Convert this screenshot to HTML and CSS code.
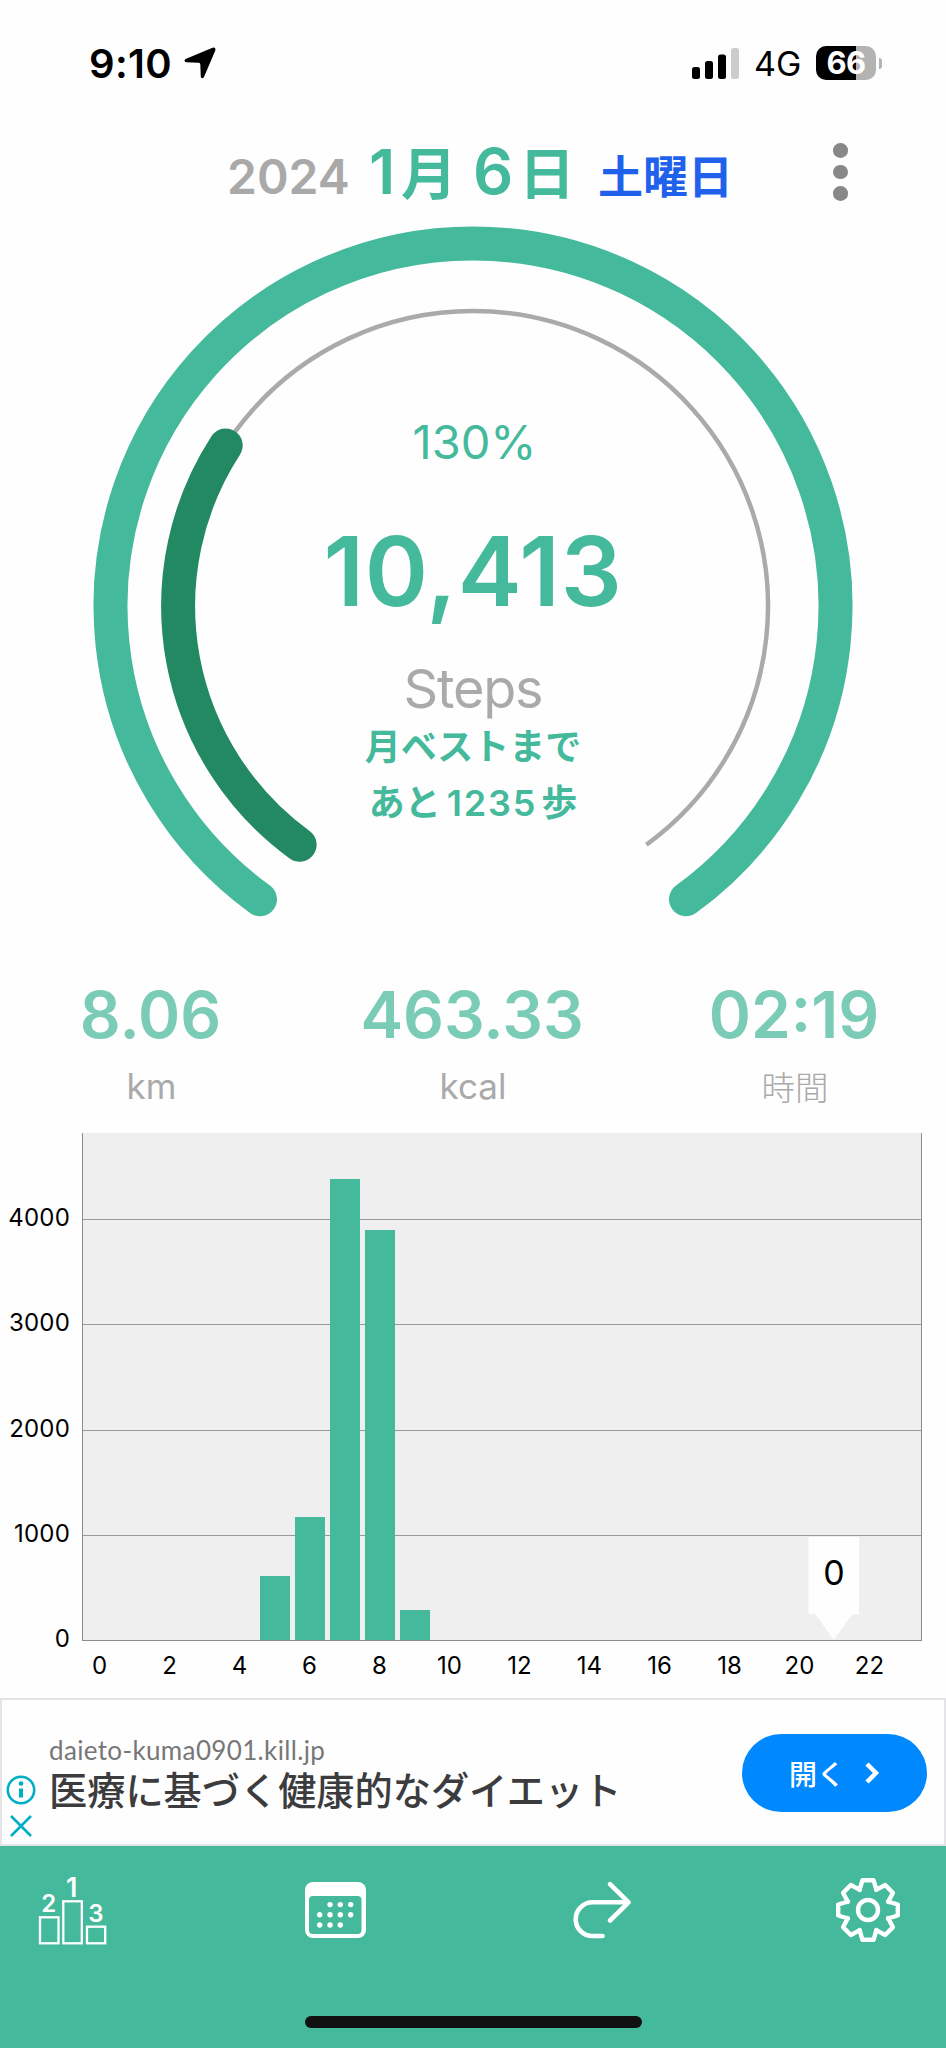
FILE: index.html
```
<!DOCTYPE html>
<html lang="ja">
<head>
  <meta charset="utf-8">
  <title>歩数計</title>
  <link rel="stylesheet" href="styles.css">
</head>
<body>
  <div class="statusBar">
    <span class="time">9:10</span>
    <svg class="location" width="32" height="32" viewBox="0 0 32 32"><path d="M28.5 0.8Q32 -0.5 31.3 3.5L20 30Q18.3 32.5 16.8 30L16.3 17.2Q16.2 15.8 14.8 15.7L2 15.2Q-0.8 14.2 1.5 12Z"/></svg>
    <svg class="signal" width="47" height="31" viewBox="0 0 47 31">
      <rect x="0" y="19" width="8" height="12" rx="2.5"/>
      <rect x="13" y="13" width="8" height="18" rx="2.5"/>
      <rect x="26" y="6.5" width="8" height="24.5" rx="2.5"/>
      <rect class="off" x="39" y="0" width="8" height="31" rx="2.5"/>
    </svg>
    <span class="network">4G</span>
    <div class="battery">66</div>
    <div class="batteryTip"></div>
  </div>

  <header class="dateBar">
    <div class="date">
      <span class="year">2024</span>
      <span class="month">1</span><span class="kanji">月</span>
      <span class="day">6</span><span class="kanji">日</span>
      <span class="weekday">土曜日</span>
    </div>
    <div class="menu"><i></i><i></i><i></i></div>
  </header>

  <section class="gauge">
    <svg class="rings" width="946" height="700" viewBox="0 220 946 700">
      <path class="total" d="M260 899.3A362.5 362.5 0 1 1 686 899.3"/>
      <path class="track" d="M299.6 844.7A295 295 0 1 1 646.4 844.7"/>
      <path class="best" d="M299.6 844.7A295 295 0 0 1 225.7 445.5"/>
    </svg>
    <div class="summary">
      <div class="percent">130%</div>
      <div class="steps">10,413</div>
      <div class="unit">Steps</div>
      <div class="toBest">月ベストまで</div>
      <div class="toBest">あと<span class="left">1235</span>歩</div>
    </div>
  </section>

  <section class="metrics">
    <div class="metric"><b>8.06</b><span>km</span></div>
    <div class="metric"><b>463.33</b><span>kcal</span></div>
    <div class="metric"><b>02:19</b><span class="jp">時間</span></div>
  </section>

  <section class="chart">
    <div class="yAxis"><span>4000</span><span>3000</span><span>2000</span><span>1000</span><span>0</span></div>
    <div class="plot" id="plot"></div>
    <div class="xAxis" id="xAxis"></div>
  </section>

  <section class="ad">
    <div class="adChoices">
      <svg width="30" height="30" viewBox="0 0 30 30"><circle cx="15" cy="15" r="13.2"/><path class="thick" d="M15 13.5V22.5"/><circle class="dot" cx="15" cy="8.5" r="2.3"/></svg>
      <svg width="30" height="26" viewBox="0 0 30 26"><path d="M5 3L25 23M25 3L5 23"/></svg>
    </div>
    <div class="adText">
      <div class="adUrl">daieto-kuma0901.kill.jp</div>
      <div class="adTitle">医療に基づく健康的なダイエット</div>
    </div>
    <div class="adButton">開く
      <svg width="18" height="22" viewBox="0 0 18 22"><path d="M4 2L13 11L4 20"/></svg>
    </div>
  </section>

  <nav class="tabs">
    <div class="icons">
      <svg class="ranking" width="70" height="72" viewBox="38 1875 70 72">
        <g class="line podium">
          <rect x="40" y="1918.3" width="18.5" height="26"/>
          <rect x="63.3" y="1902.3" width="18.5" height="42"/>
          <rect x="87" y="1927.7" width="18.2" height="16.6"/>
        </g>
        <text class="first" x="71.7" y="1898">1</text>
        <text x="48.8" y="1913">2</text>
        <text x="95.8" y="1923">3</text>
      </svg>
      <svg class="calendar" width="62" height="58" viewBox="305 1881 62 58">
        <rect x="305" y="1882" width="61" height="56" rx="8" fill="#fff"/>
        <rect x="309" y="1896" width="52.5" height="38" rx="4" fill="#44b99b"/>
        <g class="dots">
          <path d="M330 1904.6h0M340.3 1904.6h0M350.7 1904.6h0"/>
          <path d="M319.7 1914.8h0M330 1914.8h0M340.3 1914.8h0M350.7 1914.8h0"/>
          <path d="M319.7 1925h0M330 1925h0M340.3 1925h0"/>
        </g>
      </svg>
      <svg class="forward" width="60" height="60" viewBox="572 1882 60 60">
        <path class="line share" d="M602.5 1938H592.5A16.85 16.85 0 0 1 592.5 1904.3H628.5M610 1886.2L628.6 1904.3L610 1922.5"/>
      </svg>
      <svg width="68" height="68" viewBox="-34 -34 68 68">
        <path class="line gear" id="gear"/>
        <circle class="line gear" r="10"/>
      </svg>
    </div>
    <div class="homeBar"></div>
  </nav>
  <script>
    var hours=[0,0,0,0,0,611,1166,4380,3898,282,0,0,0,0,0,0,0,0,0,0,0,0,0,0];
    var bars='';
    var labels='';
    for(var i = 0; i<hours.length; i++)
    {
      bars+='<div class="slot">';
      if(hours[i]>0)
      {
        bars+='<div class="bar" style="height:'+(hours[i]*0.10525)+'px"></div>';
      }
      if(i===21)
      {
        bars+='<div class="tip">0</div>';
      }
      bars+='</div>';
      if(i%2===0)
      {
        labels+='<span>'+i+'</span>';
      }
    }
    document.getElementById("plot").innerHTML=bars;
    document.getElementById("xAxis").innerHTML=labels;

    //one tooth, turned eight times round the centre
    var tooth=[[-8.5,-20],[-5.5,-29.8],[5.5,-29.8],[8.5,-20]];
    var d='';
    for(var t = 0; t<8; t++)
    {
      var a=t*Math.PI/4;
      for(var p = 0; p<tooth.length; p++)
      {
        var x=tooth[p][0]*Math.cos(a)-tooth[p][1]*Math.sin(a);
        var y=tooth[p][0]*Math.sin(a)+tooth[p][1]*Math.cos(a);
        d+=(d===''?'M':'L')+x.toFixed(2)+' '+y.toFixed(2);
      }
    }
    document.getElementById("gear").setAttribute("d",d+'Z');
  </script>
</body>
</html>
```
FILE: styles.css
```
body {
  margin:0;
  width:946px;
  height:2048px;
  overflow:hidden;
  background-color:#fefefe;
  font-family:Inter, "Noto Sans CJK JP", sans-serif;
  color:#000;
}
.statusBar {
  display:flex;
  align-items:center;
  height:126px;
  padding-left:89px;
}
.time {
  width:95px;
  font-size:40px;
  font-weight:600;
  letter-spacing:0.3px;
}
.signal {
  margin-left:476px;
}
.signal .off {
  fill:#ccc;
}
.network {
  width:62px;
  margin-left:15px;
  font-size:34px;
}
.battery {
  width:60px;
  height:34px;
  border-radius:10px;
  background:linear-gradient(to right, #000 66%, #b3b3b3 66%);
  color:#fff;
  font-size:31px;
  font-weight:700;
  line-height:34px;
  letter-spacing:-0.6px;
  text-align:center;
}
.batteryTip {
  width:3px;
  height:11px;
  margin-left:3px;
  border-radius:0 4px 4px 0;
  background-color:#b3b3b3;
}
.dateBar {
  display:flex;
  align-items:center;
  height:94px;
}
.date {
  display:flex;
  align-items:baseline;
  width:605px;
  padding:2px 0 0 227px;
  line-height:60px;
  white-space:nowrap;
  color:#44b99b;
  font-weight:600;
}
.year {
  width:142px;
  font-size:48px;
  color:#a9a9a9;
}
.month {
  width:32px;
  font-size:62px;
}
.kanji {
  width:72px;
  font-size:56px;
}
.day {
  width:46px;
  font-size:63px;
}
.kanji + .weekday {
  margin-left:7px;
}
.weekday {
  font-size:45px;
  color:#1f61ea;
}
.menu {
  display:flex;
  flex-direction:column;
  gap:7.2px;
  padding:0 0 2px 1px;
}
.menu i {
  width:14.6px;
  height:14.6px;
  border-radius:50%;
  background-color:#888;
}
.gauge {
  display:grid;
  height:740px;
}
.rings, .summary {
  grid-area:1 / 1;
}
.rings path {
  fill:none;
  stroke-width:34;
  stroke-linecap:round;
}
.rings .total {
  stroke:#44b99b;
}
.rings .track {
  stroke:#aaa;
  stroke-width:4.5;
  stroke-linecap:butt;
}
.rings .best {
  stroke:#238962;
}
.summary {
  padding-top:192px;
  text-align:center;
  color:#44b99b;
}
.percent {
  height:96px;
  padding-left:3px;
  font-size:47px;
  line-height:60px;
}
.steps {
  height:132px;
  font-size:96px;
  font-weight:600;
  line-height:126px;
  letter-spacing:0.8px;
}
.unit {
  height:79px;
  font-size:54px;
  line-height:98px;
  letter-spacing:-1.2px;
  color:#aaa;
}
.toBest {
  height:56px;
  font-size:36px;
  font-weight:600;
  line-height:57px;
}
.left {
  margin:0 4px 0 6px;
  font-size:36px;
  letter-spacing:1.8px;
}
.metrics {
  display:grid;
  grid-template-columns:301px 342px 302px;
  height:173px;
  text-align:center;
}
.metric b {
  display:block;
  padding-top:15px;
  height:80px;
  font-size:64px;
  font-weight:600;
  line-height:80px;
  color:#7bccb6;
}
.metric span {
  display:block;
  padding-left:2px;
  font-size:35px;
  line-height:63px;
  color:#aaa;
}
.metric .jp {
  font-size:33.5px;
  font-weight:300;
  line-height:66px;
}
.chart {
  display:grid;
  grid-template-columns:82px 840px;
  grid-template-rows:508px 57px;
  font-size:24px;
}
.yAxis {
  padding:32px 12px 0 0;
  text-align:right;
  letter-spacing:0.2px;
}
.yAxis span {
  display:block;
  height:105.3px;
  line-height:105.3px;
}
.plot {
  box-sizing:border-box;
  display:flex;
  align-items:flex-end;
  border:1.5px solid #8c8c8c;
  border-top:none;
  background:repeating-linear-gradient(to top, transparent 0, transparent 104.25px, #999 104.25px, #999 105.25px) #efefef;
}
.slot {
  flex:1;
  position:relative;
}
.bar {
  width:30px;
  margin:auto;
  background-color:#44b99b;
}
.xAxis {
  grid-column:2;
  display:flex;
}
.xAxis span {
  width:35px;
  margin-right:35px;
  line-height:49px;
  text-align:center;
}
.tip {
  position:absolute;
  left:-8px;
  bottom:0;
  width:51px;
  height:103px;
  background-color:#fefefe;
  clip-path:polygon(0 0, 100% 0, 100% 75%, 86% 75%, 50% 100%, 14% 75%, 0 75%);
  font-size:34px;
  line-height:71px;
  text-align:center;
}
.ad {
  box-sizing:border-box;
  display:flex;
  height:148px;
  border:2.5px solid #e4e4e6;
}
.adChoices {
  display:flex;
  flex-direction:column;
  gap:8px;
  width:47px;
  padding:74.5px 0 0 3.5px;
  box-sizing:border-box;
}
.adChoices svg {
  fill:none;
  stroke:#00aec5;
  stroke-width:2.6;
}
.adChoices .thick {
  stroke-width:4;
}
.adChoices .dot {
  fill:#00aec5;
  stroke:none;
}
.adText {
  width:693px;
  padding-top:32px;
}
.adUrl {
  font-family:Lato, sans-serif;
  font-size:26px;
  line-height:36px;
  letter-spacing:0.35px;
  color:#777;
}
.adTitle {
  font-family:"Noto Sans CJK JP", sans-serif;
  font-size:38.2px;
  font-weight:500;
  line-height:42px;
  white-space:nowrap;
  color:#3c3c3e;
}
.adButton {
  display:flex;
  align-items:center;
  gap:18px;
  box-sizing:border-box;
  width:185px;
  height:78px;
  margin-top:33.5px;
  padding-left:47px;
  border-radius:39px;
  background-color:#0088ff;
  color:#fff;
  font-size:28px;
  font-weight:500;
}
.adButton path {
  fill:none;
  stroke:#fff;
  stroke-width:4.5;
}
.tabs {
  height:202px;
  background-color:#44b99b;
}
.icons {
  display:flex;
  align-items:center;
  height:128px;
  padding-left:38px;
}
.ranking {
  overflow:visible;
}
.calendar {
  margin-left:197px;
}
.forward {
  margin-left:205px;
  margin-right:202px;
}
.icons text {
  fill:#fff;
  font-size:24px;
  font-weight:600;
  text-anchor:middle;
}
.icons .first {
  font-size:27px;
}
.line {
  fill:none;
  stroke:#fff;
  stroke-width:4.6;
  stroke-linecap:round;
  stroke-linejoin:round;
}
.podium {
  stroke-width:2.3;
  stroke-linejoin:miter;
}
.gear {
  stroke-width:4.4;
}
.dots {
  stroke:#fff;
  stroke-width:5.4;
  stroke-linecap:round;
}
.homeBar {
  width:337px;
  height:12px;
  margin:42px auto 0;
  border-radius:6px;
  background-color:#111;
}
```
